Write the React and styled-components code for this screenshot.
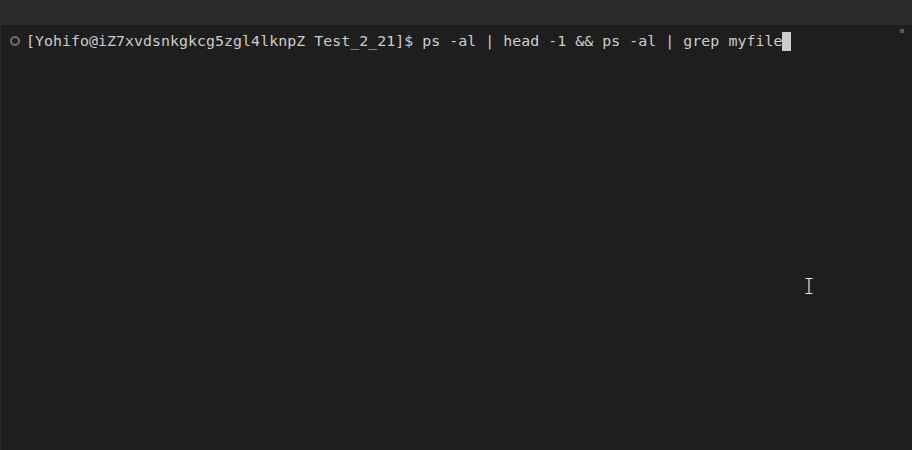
import React from 'react';
import styled, { createGlobalStyle } from 'styled-components';

const GlobalStyle = createGlobalStyle`
    html, body {
        margin: 0;
        padding: 0;
        background: #1e1e1e;
    }
`;

const Window = styled.div`
    width: 912px;
    height: 450px;
    display: flex;
    flex-direction: column;
    background: #1e1e1e;
    position: relative;
    overflow: hidden;
`;

const TopBar = styled.div`
    height: 25px;
    background: #2c2c2c;
    flex-shrink: 0;
`;

const Body = styled.div`
    flex: 1;
    padding: 6px 0 0 8px;
    border-left: 1px solid #2a2a2a;
`;

const Line = styled.div`
    display: flex;
    align-items: center;
    gap: 6px;
    height: 20px;
`;

const Marker = styled.span`
    width: 6px;
    height: 6px;
    border: 2px solid #6e6e6e;
    border-radius: 50%;
    flex-shrink: 0;
    margin-left: 1px;
`;

const Prompt = styled.span`
    font-family: "DejaVu Sans Mono", "Liberation Mono", monospace;
    font-size: 14.9px;
    letter-spacing: 0.04px;
    color: #cccccc;
    white-space: pre;
    line-height: 20px;
`;

const Caret = styled.span`
    display: inline-block;
    width: 9px;
    height: 19px;
    background: #cccccc;
    vertical-align: top;
    margin-top: 1px;
`;

const ScrollMark = styled.div`
    position: absolute;
    top: 29px;
    right: 8px;
    width: 4px;
    height: 4px;
    background: #5a5a5a;
`;

const Pointer = styled.svg`
    position: absolute;
    left: 804px;
    top: 277px;
`;

export default function App() {
    return (
        <>
            <GlobalStyle />
            <Window>
                <TopBar />
                <Body>
                    <Line>
                        <Marker />
                        <Prompt>
                            [Yohifo@iZ7xvdsnkgkcg5zgl4lknpZ Test_2_21]$ ps -al | head -1 &amp;&amp; ps -al | grep myfile<Caret />
                        </Prompt>
                    </Line>
                </Body>
                <ScrollMark />
                <Pointer width="10" height="18" viewBox="0 0 10 18">
                    <path d="M1.5 1.5h7M5 1.5v15M1.5 16.5h7" stroke="#e8e8e8" strokeWidth="1.2" fill="none" />
                </Pointer>
            </Window>
        </>
    );
}
